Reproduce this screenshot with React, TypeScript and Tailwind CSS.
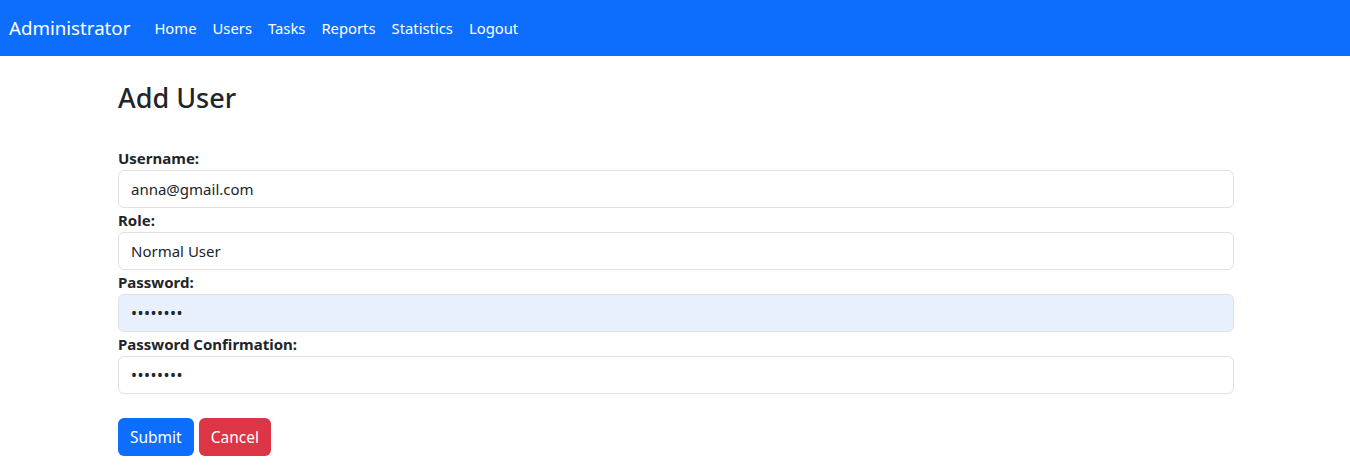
export default function App() {
  const fields = [
    { label: "Username:", value: "anna@gmail.com", type: "text" },
    { label: "Role:", value: "Normal User", type: "text" },
    { label: "Password:", value: "••••••••", type: "password", autofill: true },
    { label: "Password Confirmation:", value: "••••••••", type: "password" },
  ];

  return (
    <div className="min-h-screen bg-white text-[#212529]" style={{ fontFamily: '"Noto Sans", "Liberation Sans", sans-serif' }}>
      {/* Navbar */}
      <nav className="h-14 bg-[#0d6efd] flex items-center px-[9px]">
        <span className="text-[18.7px] text-white mr-4">Administrator</span>
        <div className="flex items-center">
          {["Home", "Users", "Tasks", "Reports", "Statistics", "Logout"].map((l) => (
            <a key={l} href="#" className="px-2 text-[14.8px] text-white">
              {l}
            </a>
          ))}
        </div>
      </nav>

      <main className="w-[1116px] ml-[118px] pt-[26px]">
        <h2 className="text-[27px] font-medium leading-[1.2] mb-[32px]">Add User</h2>

        <form>
          {fields.map((f) => (
            <div key={f.label}>
              <label className="block text-[15px] font-bold leading-6">{f.label}</label>
              <div
                className={`h-[38px] flex items-center px-3 border border-[#dee2e6] rounded-md ${
                  f.autofill ? "bg-[#e8f0fe]" : "bg-white"
                } ${f.type === "password" ? "text-[16px] tracking-[0.5px]" : "text-[15px]"}`}
              >
                {f.value}
              </div>
            </div>
          ))}

          <div className="mt-6 flex gap-[5px]">
            <button type="button" className="h-[38px] px-3 rounded-md bg-[#0d6efd] text-white text-[15.5px]">
              Submit
            </button>
            <button type="button" className="h-[38px] px-3 rounded-md bg-[#dc3545] text-white text-[15.5px]">
              Cancel
            </button>
          </div>
        </form>
      </main>
    </div>
  );
}
